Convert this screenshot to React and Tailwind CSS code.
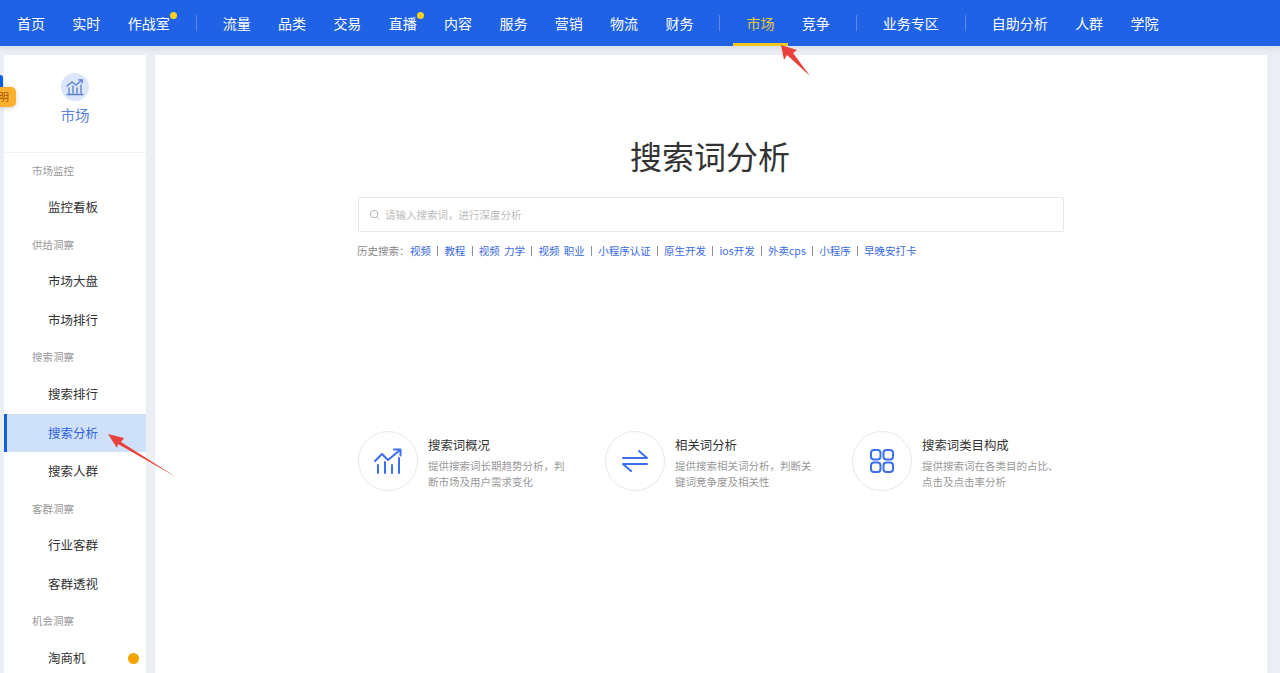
import { Search } from 'lucide-react'

const font = { fontFamily: '"Noto Sans CJK SC", "Liberation Sans", sans-serif' }

const nav = [
  ['首页'], ['实时'], ['作战室', 'dot'], '|',
  ['流量'], ['品类'], ['交易'], ['直播', 'dot'], ['内容'], ['服务'], ['营销'], ['物流'], ['财务'], '|',
  ['市场', 'active'], ['竞争'], '|',
  ['业务专区'], '|',
  ['自助分析'], ['人群'], ['学院'],
]

const menu = [
  { label: '市场监控', items: ['监控看板'] },
  { label: '供给洞察', items: ['市场大盘', '市场排行'] },
  { label: '搜索洞察', items: ['搜索排行', '搜索分析', '搜索人群'] },
  { label: '客群洞察', items: ['行业客群', '客群透视'] },
  { label: '机会洞察', items: ['淘商机'] },
]

const history = ['视频', '教程', '视频 力学', '视频 职业', '小程序认证', '原生开发', 'ios开发', '外卖cps', '小程序', '早晚安打卡']

function TrendIcon() {
  return (
    <svg width="28" height="26" viewBox="0 0 28 26" fill="none" stroke="#3b6ff0" strokeWidth="2" strokeLinecap="round" strokeLinejoin="round">
      <path d="M1 13 L8 6 L14 12 L26 2" />
      <path d="M20 1.5 L26.5 1.5 L26.5 7.5" />
      <path d="M4 17 V25 M11 14 V25 M18 17 V25 M25 10 V25" />
    </svg>
  )
}

function SwapIcon() {
  return (
    <svg width="26" height="22" viewBox="0 0 26 22" fill="none" stroke="#3b6ff0" strokeWidth="2" strokeLinecap="round" strokeLinejoin="round">
      <path d="M1 8 H25 L17 1" />
      <path d="M25 14 H1 L9 21" />
    </svg>
  )
}

function GridIcon() {
  return (
    <svg width="24" height="24" viewBox="0 0 24 24" fill="none" stroke="#3b6ff0" strokeWidth="2">
      <rect x="1" y="1" width="9.5" height="9.5" rx="3" />
      <rect x="13.5" y="1" width="9.5" height="9.5" rx="3" />
      <rect x="1" y="13.5" width="9.5" height="9.5" rx="3" />
      <rect x="13.5" y="13.5" width="9.5" height="9.5" rx="3" />
    </svg>
  )
}

const features = [
  { title: '搜索词概况', desc: ['提供搜索词长期趋势分析，判', '断市场及用户需求变化'], icon: TrendIcon },
  { title: '相关词分析', desc: ['提供搜索相关词分析，判断关', '键词竞争度及相关性'], icon: SwapIcon },
  { title: '搜索词类目构成', desc: ['提供搜索词在各类目的占比、', '点击及点击率分析'], icon: GridIcon },
]

export default function App() {
  return (
    <div className="relative flex h-screen flex-col overflow-hidden bg-[#ebeef3]" style={font}>
      <header className="relative z-10 flex h-[46px] shrink-0 items-center gap-[27.35px] bg-[#2062e6] pl-[17px] text-[14px] text-white shadow-[0_2px_6px_rgba(60,80,120,0.12)]">
        {nav.map((item, i) => {
          if (item === '|') return <span key={i} className="-mx-[1.35px] h-[16px] w-px bg-white/25" />
          const [name, flag] = item
          return (
            <span key={i} className={`relative flex h-[46px] items-center whitespace-nowrap ${flag === 'active' ? 'text-[#e8c53a]' : ''}`}>
              {name}
              {flag === 'dot' && <i className="absolute right-[-7px] top-[12px] h-[7px] w-[7px] rounded-full bg-[#f5d020]" />}
              {flag === 'active' && <i className="absolute bottom-0 left-[-13px] right-[-14px] h-[3px] bg-[#f0c81e]" />}
            </span>
          )
        })}
      </header>

      <div className="flex min-h-0 flex-1 gap-[9px] pl-[4px] pr-[13px] pt-[9px]">
        <aside className="w-[142px] shrink-0 bg-white">
          <div className="flex h-[98px] flex-col items-center border-b border-[#f0f1f4] pt-[18px]">
            <span className="flex h-[28px] w-[28px] items-center justify-center rounded-full bg-[#dbe6fb]">
              <svg width="18" height="18" viewBox="0 0 18 18" fill="none" stroke="#5b7fd0" strokeWidth="1.3" strokeLinecap="round" strokeLinejoin="round">
                <path d="M1 8 L6 4 L10 7 L16 2" />
                <path d="M12.5 1.8 H16.2 V5" />
                <path d="M3 10 V15 M7 8 V15 M11 10 V15 M15 7 V15 M1 16.5 H17" />
              </svg>
            </span>
            <span className="mt-[3px] text-[14.5px] leading-[22px] text-[#5b82d8]">市场</span>
          </div>
          <nav>
            {menu.map((group) => (
              <div key={group.label}>
                <div className="flex h-[35.3px] items-center pl-[28px] text-[10.5px] text-[#999]">{group.label}</div>
                {group.items.map((name) => {
                  const active = name === '搜索分析'
                  return (
                    <div
                      key={name}
                      className={`relative flex h-[38.7px] items-center text-[12.5px] ${active ? 'border-l-[3px] border-[#0d5fe0] bg-[#cfe0fb] pl-[41px] text-[#2f62e0]' : 'pl-[44px] text-[#333]'}`}
                    >
                      {name}
                      {name === '淘商机' && <i className="absolute right-[7px] top-[14px] h-[11px] w-[11px] rounded-full bg-[#f5a300]" />}
                    </div>
                  )
                })}
              </div>
            ))}
          </nav>
        </aside>

        <main className="flex-1 bg-white">
          <div className="mx-auto w-[706px] pt-[78px]">
            <h1 className="pr-[2px] text-center text-[32px] font-normal leading-[44px] text-[#333]">搜索词分析</h1>
            <div className="mt-[20px] flex h-[35px] items-center rounded-[2px] border border-[#e6e7ea] pl-[10px]">
              <Search size={11} strokeWidth={1.6} className="text-[#999]" />
              <span className="ml-[5px] text-[10.5px] text-[#bbb]">请输入搜索词，进行深度分析</span>
            </div>
            <div className="-ml-px mt-[11px] flex h-[16px] items-center whitespace-nowrap text-[10.5px] leading-[16px]">
              <span className="mr-[1px] w-[52px] text-[#888]">历史搜索：</span>
              {history.map((h, i) => (
                <span key={h} className="flex items-center">
                  {i > 0 && <i className="mx-[6.2px] h-[10px] w-px bg-[#8a8f9a]" />}
                  <span className="text-[#3a6be0] [word-spacing:2px]">{h}</span>
                </span>
              ))}
            </div>
            <div className="mt-[172px] flex">
              {features.map((f) => {
                const Icon = f.icon
                return (
                  <div key={f.title} className="flex w-[247px] shrink-0 gap-[10px]">
                    <span className="flex h-[60px] w-[60px] shrink-0 items-center justify-center rounded-full border border-[#e8e8ea]">
                      <Icon />
                    </span>
                    <div className="pt-[5px]">
                      <div className="text-[12.4px] leading-[18px] text-[#333]">{f.title}</div>
                      <div className="mt-[4px] whitespace-nowrap text-[10.5px] leading-[16px] text-[#999]">
                        {f.desc.map((line) => <div key={line}>{line}</div>)}
                      </div>
                    </div>
                  </div>
                )
              })}
            </div>
          </div>
        </main>
      </div>

      {/* side tab that sticks out at the left edge */}
      <div className="absolute left-0 top-[75px] h-[14px] w-[3px] rounded-tr-[3px] bg-[#0d5fe0]" />
      <div className="absolute left-0 top-[87px] flex h-[20px] w-[16px] items-center justify-end overflow-hidden rounded-r-[5px] bg-[#fdb02e] pr-[7px] text-[10.5px] text-[#a8560a] shadow-[0_1px_5px_rgba(0,0,0,0.18)]">
        <span className="whitespace-nowrap">明</span>
      </div>

      {/* red annotation arrows */}
      <svg className="absolute left-[775px] top-[40px] z-20" width="40" height="40" viewBox="775 40 40 40">
        <polygon points="781,45 797,50 793,53 810,76 787,55 784,60" fill="#e8403a" />
      </svg>
      <svg className="absolute left-[100px] top-[428px] z-20" width="80" height="52" viewBox="100 428 80 52">
        <polygon points="108,434 124,438 121,442 176,477 118,444 117,448" fill="#e8403a" />
      </svg>
    </div>
  )
}
